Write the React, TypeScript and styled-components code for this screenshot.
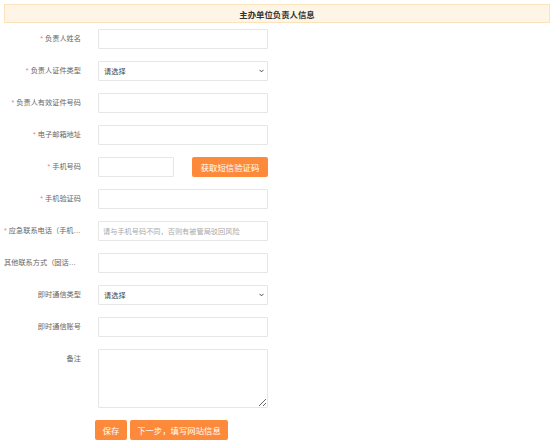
import React from "react";
import styled, { createGlobalStyle } from "styled-components";

const GlobalStyle = createGlobalStyle`
  html, body {
    margin: 0;
    padding: 0;
    background: #ffffff;
  }
  body {
    font-family: "Noto Sans CJK SC", "Noto Sans", "Liberation Sans", sans-serif;
    color: #666666;
  }
`;

const Page = styled.div`
  width: 554px;
  box-sizing: border-box;
  padding: 4px;
`;

const SectionTitle = styled.div`
  height: 19px;
  box-sizing: border-box;
  border: 1px solid #fbe3bb;
  background: #fff5e6;
  display: flex;
  align-items: center;
  justify-content: center;
  font-size: 8.4px;
  font-weight: 700;
  color: #333333;
  margin-bottom: 6px;
`;

const Form = styled.div`
  display: flex;
  flex-direction: column;
  gap: 12px;
`;

const Row = styled.div`
  display: grid;
  grid-template-columns: 77px 170px;
  column-gap: 17px;
  align-items: start;
`;

const Label = styled.label`
  display: block;
  line-height: 20px;
  font-family: "Liberation Sans", "Noto Sans CJK SC", sans-serif;
  font-size: 7.2px;
  color: #666666;
  text-align: right;
  white-space: nowrap;
  overflow: hidden;
  text-overflow: ellipsis;
`;

const Star = styled.span`
  color: #f47b7b;
  margin-right: 2px;
`;

const fieldBase = `
  display: block;
  box-sizing: border-box;
  height: 20px;
  margin: 0;
  border: 1px solid #e6e6e6;
  border-radius: 1px;
  background: #ffffff;
  font-family: "Noto Sans CJK SC", "Noto Sans", sans-serif;
  font-size: 7.2px;
  color: #555555;
  outline: none;
`;

const Input = styled.input<{ $w?: number }>`
  ${fieldBase}
  width: ${(p) => (p.$w ? `${p.$w}px` : "100%")};
  padding: 0 4px;
  &::placeholder {
    color: #a9a9a9;
  }
`;

const SelectWrap = styled.div`
  position: relative;
  width: 100%;
  height: 20px;
`;

const Select = styled.select`
  ${fieldBase}
  width: 100%;
  padding: 0 5px;
  appearance: none;
  -webkit-appearance: none;
  color: #444444;
`;

const Chevron = styled.svg`
  position: absolute;
  right: 4px;
  top: 8px;
  width: 5px;
  height: 4px;
  pointer-events: none;
`;

const TextArea = styled.textarea`
  ${fieldBase}
  width: 100%;
  height: 59px;
  padding: 3px 4px;
  resize: both;
`;

const PhoneField = styled.div`
  display: flex;
  justify-content: space-between;
`;

const OrangeButton = styled.button<{ $w: number }>`
  box-sizing: border-box;
  width: ${(p) => p.$w}px;
  height: 20px;
  padding: 0;
  border: none;
  border-radius: 2px;
  background: #fd8a3b;
  color: #ffffff;
  font-family: "Noto Sans CJK SC", "Noto Sans", sans-serif;
  font-size: 8.4px;
  cursor: pointer;
`;

const Actions = styled.div`
  display: flex;
  gap: 3px;
  padding-left: 91px;
`;

const Field: React.FC<{ label: string; required?: boolean; children: React.ReactNode }> = ({
  label,
  required,
  children,
}) => (
  <Row>
    <Label title={label}>
      {required && <Star>*</Star>}
      {label}
    </Label>
    {children}
  </Row>
);

const Dropdown = () => (
  <SelectWrap>
    <Select defaultValue="">
      <option value="">请选择</option>
    </Select>
    <Chevron viewBox="0 0 10 7">
      <path d="M1 1.2 L5 5.2 L9 1.2" fill="none" stroke="#333" strokeWidth="1.8" />
    </Chevron>
  </SelectWrap>
);

export default function App() {
  return (
    <Page>
      <GlobalStyle />
      <SectionTitle>主办单位负责人信息</SectionTitle>
      <Form>
        <Field label="负责人姓名" required>
          <Input />
        </Field>
        <Field label="负责人证件类型" required>
          <Dropdown />
        </Field>
        <Field label="负责人有效证件号码" required>
          <Input />
        </Field>
        <Field label="电子邮箱地址" required>
          <Input />
        </Field>
        <Field label="手机号码" required>
          <PhoneField>
            <Input $w={76} />
            <OrangeButton $w={76}>获取短信验证码</OrangeButton>
          </PhoneField>
        </Field>
        <Field label="手机验证码" required>
          <Input />
        </Field>
        <Field label="应急联系电话（手机号码）" required>
          <Input placeholder="请与手机号码不同，否则有被管局驳回风险" />
        </Field>
        <Field label="其他联系方式（固话或手机）">
          <Input />
        </Field>
        <Field label="即时通信类型">
          <Dropdown />
        </Field>
        <Field label="即时通信账号">
          <Input />
        </Field>
        <Field label="备注">
          <TextArea />
        </Field>
        <Actions>
          <OrangeButton $w={32}>保存</OrangeButton>
          <OrangeButton $w={98}>下一步，填写网站信息</OrangeButton>
        </Actions>
      </Form>
    </Page>
  );
}
